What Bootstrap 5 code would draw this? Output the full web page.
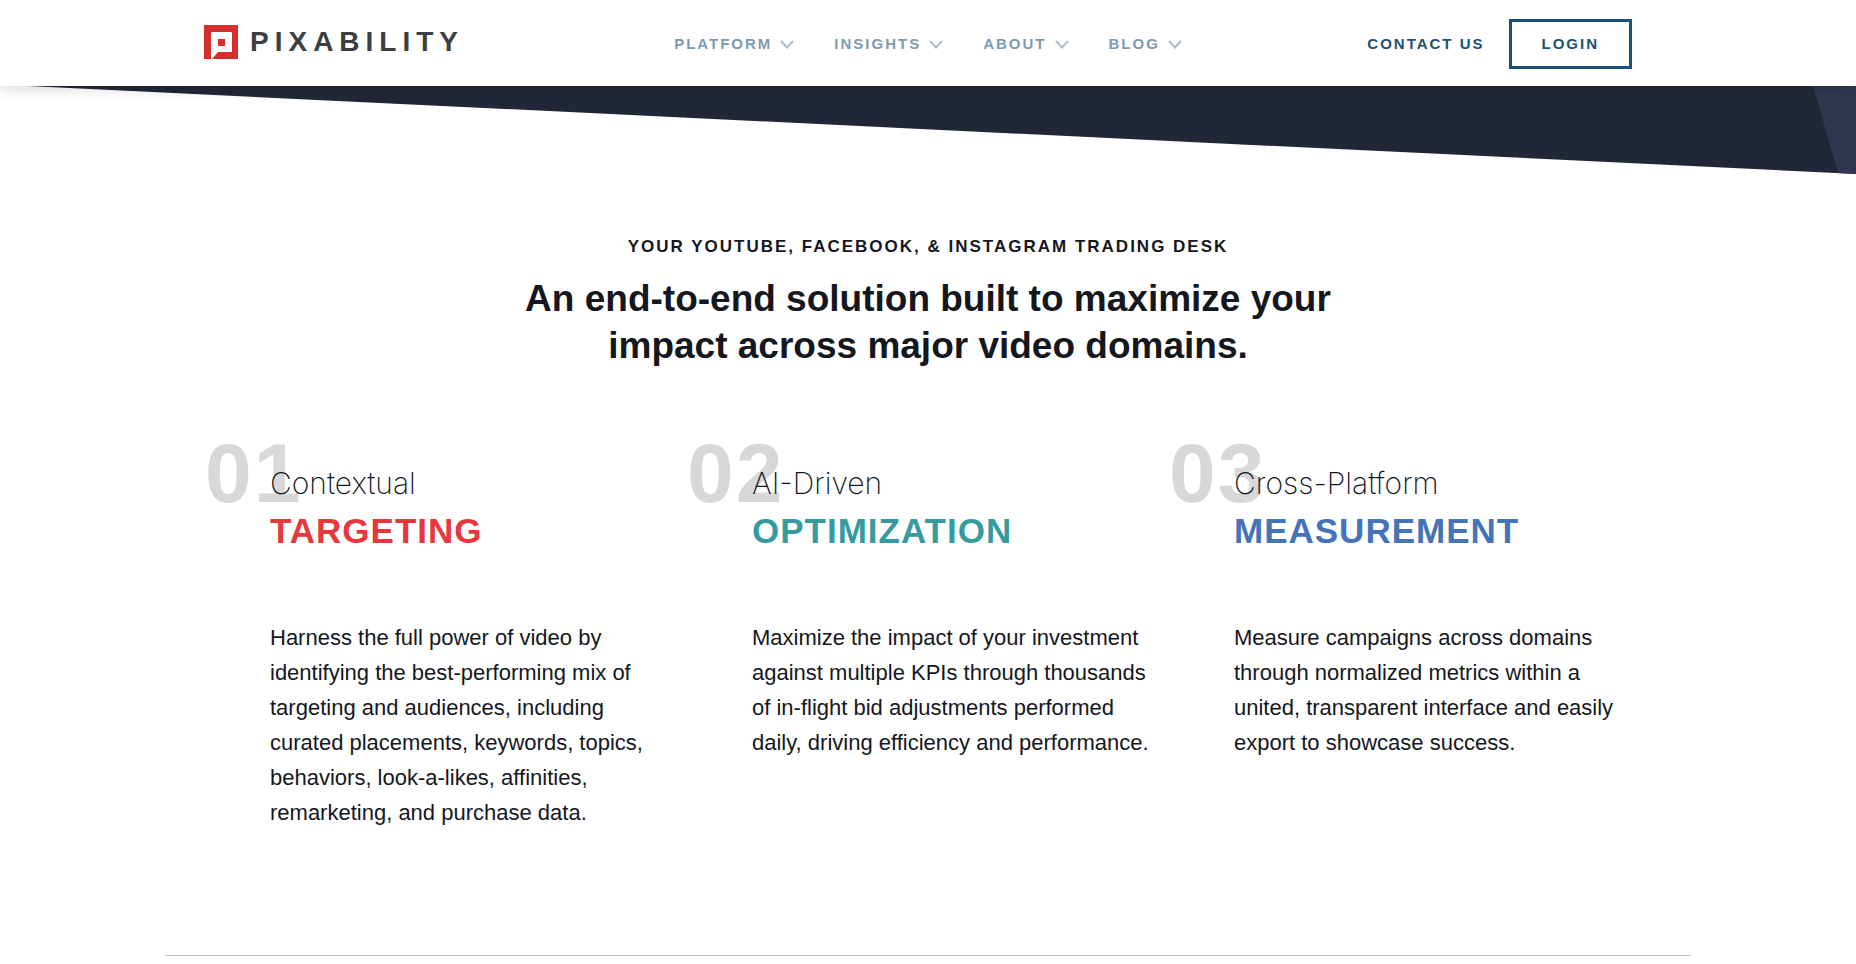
<!DOCTYPE html>
<html lang="en">
<head>
<meta charset="utf-8">
<meta name="viewport" content="width=device-width, initial-scale=1">
<title>Pixability</title>
<link href="https://cdn.jsdelivr.net/npm/bootstrap@5.3.0/dist/css/bootstrap.min.css" rel="stylesheet">
<style>
  body { font-family: "Liberation Sans", Arial, sans-serif; color: #14171e; background: #fff; }
  .site-header { min-height: 86px; padding-top: 2px; box-shadow: 0 0 16px rgba(0,0,0,.2); }
  .header-inner { max-width: 1448px; }
  .brand-word { font-size: 28px; line-height: 32px; font-weight: 700; letter-spacing: 6px; color: #3b3f44; }
  .menu-toggle, .header-link, .btn-login { font-size: 15px; line-height: 20px; font-weight: 700; letter-spacing: 2px; }
  .menu-toggle { color: #7c9bb3; }
  .main-menu { column-gap: 40px; }
  .header-link, .btn-login { color: #1b5079; }
  .btn-login { border: 3px solid #1b5079; border-radius: 0; padding: 12px 30px; margin-right: 20px; }
  .btn-login:hover { background: #1b5079; color: #fff; }
  .slant { height: 88px; }
  .eyebrow { font-size: 17px; line-height: 24px; font-weight: 700; letter-spacing: 2px; }
  .headline { font-size: 37px; line-height: 47px; font-weight: 700; max-width: 880px; }
  .intro { padding-top: 61px; }
  .steps { max-width: 1446px; padding-top: 64px; }
  .step { padding-left: 65px; padding-right: 10px; }
  .step-number { left: 0; top: 0; font-size: 84px; line-height: 80px; font-weight: 700; letter-spacing: 2px; color: #d8d8d8; }
  .step-title { padding-top: 26px; }
  .step-kind { font-family: Inter, "Liberation Sans", sans-serif; font-size: 30px; line-height: 48px; font-weight: 200; }
  .step-name { font-size: 35px; line-height: 48px; font-weight: 700; letter-spacing: 1px; }
  .targeting { color: #e8363d; }
  .optimization { color: #359ba1; }
  .measurement { color: #4573b9; }
  .step-text { font-size: 22px; line-height: 35px; margin-top: 65px; }
  .rule { max-width: 1524px; border-top: 1px solid #b8b8b8; opacity: 1; margin-top: 125px; }
</style>
</head>
<body>
<header class="site-header sticky-top bg-white d-flex">
  <div class="header-inner container-fluid px-0 d-flex flex-wrap align-items-center">
    <div class="col-lg d-flex pb-1">
      <a href="#" class="d-flex align-items-center gap-2 text-decoration-none">
        <svg width="34" height="34" viewBox="0 0 34 34" aria-hidden="true">
          <path fill="#d62e2c" d="M0 0H34V34H0Z"/>
          <path fill="#fff" d="M7 7H28V27H14L8 34H7Z"/>
          <path fill="#d62e2c" d="M14 14H21V21H14Z"/>
        </svg>
        <span class="brand-word ps-1">PIXABILITY</span>
      </a>
    </div>
    <nav class="main-menu d-flex flex-wrap" aria-label="Main">
      <button type="button" class="menu-toggle btn border-0 p-0 d-flex align-items-center gap-2">PLATFORM
        <svg width="14" height="9" viewBox="0 0 14 9" fill="none" stroke="#a9bdcb" stroke-width="2" aria-hidden="true"><path d="M1 1L7 7.5L13 1"/></svg></button>
      <button type="button" class="menu-toggle btn border-0 p-0 d-flex align-items-center gap-2">INSIGHTS
        <svg width="14" height="9" viewBox="0 0 14 9" fill="none" stroke="#a9bdcb" stroke-width="2" aria-hidden="true"><path d="M1 1L7 7.5L13 1"/></svg></button>
      <button type="button" class="menu-toggle btn border-0 p-0 d-flex align-items-center gap-2">ABOUT
        <svg width="14" height="9" viewBox="0 0 14 9" fill="none" stroke="#a9bdcb" stroke-width="2" aria-hidden="true"><path d="M1 1L7 7.5L13 1"/></svg></button>
      <button type="button" class="menu-toggle btn border-0 p-0 d-flex align-items-center gap-2">BLOG
        <svg width="14" height="9" viewBox="0 0 14 9" fill="none" stroke="#a9bdcb" stroke-width="2" aria-hidden="true"><path d="M1 1L7 7.5L13 1"/></svg></button>
    </nav>
    <div class="col-lg d-flex align-items-center justify-content-end gap-4">
      <a href="#" class="header-link text-decoration-none">CONTACT US</a>
      <button type="button" class="btn btn-login">LOGIN</button>
    </div>
  </div>
</header>
<main>
  <svg class="slant d-block w-100" viewBox="0 0 1856 88" preserveAspectRatio="none" aria-hidden="true">
    <path fill="#222737" d="M28 0H1856V88Z"/>
    <path fill="#30364d" d="M1813 0H1856V88L1838 87Z"/>
  </svg>
  <section class="intro text-center">
    <p class="eyebrow mb-3">YOUR YOUTUBE, FACEBOOK, &amp; INSTAGRAM TRADING DESK</p>
    <h1 class="headline mx-auto mb-0">An end-to-end solution built to maximize your impact across major video domains.</h1>
  </section>
  <section class="steps container-fluid px-0">
    <div class="row g-0">
      <article class="step col-lg-4 position-relative">
        <span class="step-number position-absolute">01</span>
        <h2 class="step-title position-relative mb-0"><span class="step-kind d-block">Contextual</span><span class="step-name targeting d-block">TARGETING</span></h2>
        <p class="step-text mb-0">Harness the full power of video by identifying the best-performing mix of targeting and audiences, including curated placements, keywords, topics, behaviors, look-a-likes, affinities, remarketing, and purchase data.</p>
      </article>
      <article class="step col-lg-4 position-relative">
        <span class="step-number position-absolute">02</span>
        <h2 class="step-title position-relative mb-0"><span class="step-kind d-block">AI-Driven</span><span class="step-name optimization d-block">OPTIMIZATION</span></h2>
        <p class="step-text mb-0">Maximize the impact of your investment against multiple KPIs through thousands of in-flight bid adjustments performed daily, driving efficiency and performance.</p>
      </article>
      <article class="step col-lg-4 position-relative">
        <span class="step-number position-absolute">03</span>
        <h2 class="step-title position-relative mb-0"><span class="step-kind d-block">Cross-Platform</span><span class="step-name measurement d-block">MEASUREMENT</span></h2>
        <p class="step-text mb-0">Measure campaigns across domains through normalized metrics within a united, transparent interface and easily export to showcase success.</p>
      </article>
    </div>
  </section>
  <hr class="rule mx-auto mb-0">
</main>
<script src="https://cdn.jsdelivr.net/npm/bootstrap@5.3.0/dist/js/bootstrap.bundle.min.js"></script>
</body>
</html>
